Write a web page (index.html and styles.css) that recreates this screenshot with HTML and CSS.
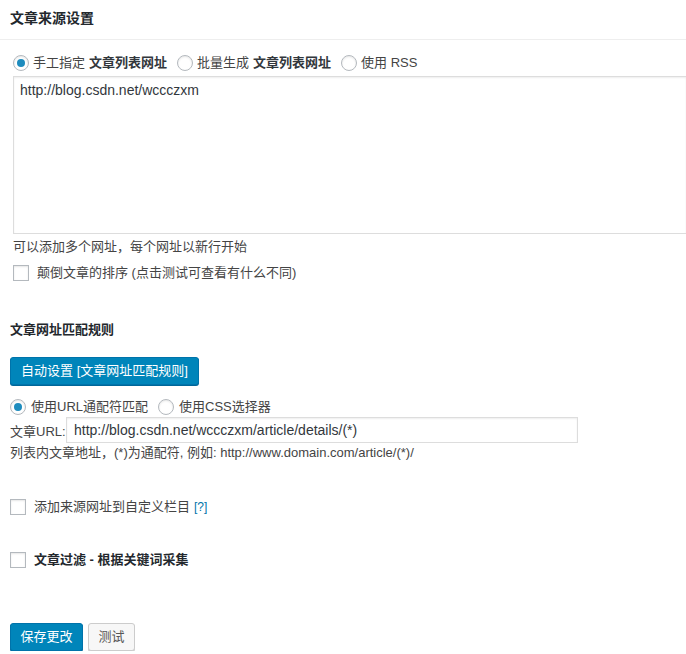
FILE: index.html
```html
<!DOCTYPE html>
<html>
<head>
<meta charset="utf-8">
<link rel="stylesheet" href="styles.css">
</head>
<body>
<div class="page">
  <h2 class="box-title">文章来源设置</h2>
  <div class="section first">
    <div class="radio-row">
      <label class="opt"><span class="radio checked"></span>手工指定 <b>文章列表网址</b></label>
      <label class="opt"><span class="radio"></span>批量生成 <b>文章列表网址</b></label>
      <label class="opt"><span class="radio"></span>使用 RSS</label>
    </div>
    <div class="textarea">http://blog.csdn.net/wccczxm</div>
    <p class="help">可以添加多个网址，每个网址以新行开始</p>
    <label class="check-row"><span class="checkbox"></span>颠倒文章的排序 (点击测试可查看有什么不同)</label>
  </div>
  <div class="section second">
    <h3 class="sub-title">文章网址匹配规则</h3>
    <button class="btn primary auto">自动设置 [文章网址匹配规则]</button>
    <div class="radio-row r2">
      <label class="opt"><span class="radio checked"></span>使用URL通配符匹配</label>
      <label class="opt"><span class="radio"></span>使用CSS选择器</label>
    </div>
    <div class="url-row">
      <span class="url-label">文章URL:</span>
      <div class="input">http://blog.csdn.net/wccczxm/article/details/(*)</div>
    </div>
    <p class="help h2">列表内文章地址，(*)为通配符, 例如: http://www.domain.com/article/(*)/</p>
    <label class="check-row c1"><span class="checkbox"></span>添加来源网址到自定义栏目 <span class="q">[?]</span></label>
    <label class="check-row c2"><span class="checkbox"></span><b>文章过滤 - 根据关键词采集</b></label>
    <div class="actions">
      <button class="btn primary save">保存更改</button>
      <button class="btn secondary">测试</button>
    </div>
  </div>
</div>
</body>
</html>
```

FILE: styles.css
```css
html, body {
  margin: 0;
  padding: 0;
  background: #fff;
}
body {
  font-family: "Segoe UI", "Liberation Sans", "Noto Sans CJK SC", sans-serif;
  font-size: 13px;
  color: #444;
}
.page { width: 686px; }
.box-title {
  margin: 0;
  font-size: 14px;
  font-weight: bold;
  color: #23282d;
  line-height: 20px;
  padding: 8px 10px 11px;
  border-bottom: 1px solid #eee;
}
.section.first { padding-left: 13px; }
.section.second { padding-left: 10px; }
.radio-row {
  display: flex;
  align-items: center;
  margin-top: 13px;
  line-height: 20px;
}
.opt {
  display: flex;
  align-items: center;
  margin-right: 10px;
  white-space: nowrap;
}
.opt b { font-weight: bold; color: #32373c; margin-left: 4px; }
.radio {
  width: 14px;
  height: 14px;
  border: 1px solid #b4b9be;
  border-radius: 50%;
  box-shadow: inset 0 1px 2px rgba(0,0,0,0.1);
  margin-right: 4px;
  position: relative;
  flex: none;
}
.radio.checked::after {
  content: "";
  position: absolute;
  left: 3px;
  top: 3px;
  width: 8px;
  height: 8px;
  border-radius: 50%;
  background: #1e8cbe;
}
.textarea {
  margin-top: 3px;
  height: 158px;
  border: 1px solid #ddd;
  border-right: none;
  box-shadow: inset 0 1px 2px rgba(0,0,0,0.07);
  padding: 3px 6px 0;
  font-size: 14px;
  line-height: 20px;
  color: #32373c;
  box-sizing: border-box;
}
.help {
  margin: 3px 0 0;
  line-height: 20px;
  color: #444;
}
.check-row {
  display: flex;
  align-items: center;
  margin-top: 6px;
  line-height: 20px;
}
.checkbox {
  width: 14px;
  height: 14px;
  border: 1px solid #b4b9be;
  background: #fff;
  box-shadow: inset 0 1px 2px rgba(0,0,0,0.1);
  margin-right: 8px;
  flex: none;
}
.sub-title {
  margin: 37px 0 0;
  font-size: 13px;
  font-weight: bold;
  color: #23282d;
  line-height: 20px;
}
.btn {
  font-family: inherit;
  font-size: 13px;
  height: 28px;
  line-height: 26px;
  padding: 0;
  border-radius: 3px;
  cursor: pointer;
  display: inline-block;
  box-sizing: border-box;
}
.btn.primary {
  background: #0085ba;
  border: 1px solid #0073aa;
  color: #fff;
  box-shadow: 0 1px 0 #006799;
}
.btn.secondary {
  background: #f7f7f7;
  border: 1px solid #ccc;
  color: #555;
  box-shadow: 0 1px 0 #ccc;
  width: 47px;
}
.btn.auto {
  margin-top: 17px;
  width: 189px;
  display: block;
}
.radio-row.r2 { margin-top: 12px; }
.r2 .opt { margin-right: 10px; }
.r2 .radio { margin-right: 5px; }
.url-row {
  display: flex;
  align-items: center;
  height: 26px;
}
.url-label { width: 56px; flex: none; }
.input {
  width: 512px;
  height: 26px;
  line-height: 24px;
  border: 1px solid #ddd;
  box-shadow: inset 0 1px 2px rgba(0,0,0,0.07);
  padding: 0 7px;
  font-size: 14px;
  color: #32373c;
  box-sizing: border-box;
}
.help.h2 { margin-top: 0; }
.check-row.c1 { margin-top: 34px; }
.check-row.c2 { margin-top: 33px; }
.check-row b { color: #23282d; }
.q { color: #0073aa; font-size: 12px; margin-left: 4px; }
.actions {
  margin-top: 53px;
  display: flex;
  gap: 5px;
}
.btn.save { width: 73px; }
```
